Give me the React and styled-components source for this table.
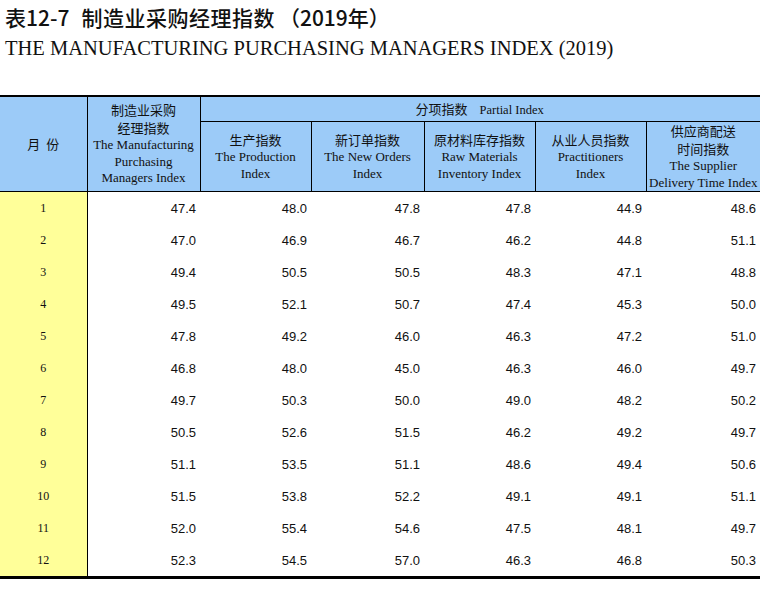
import React from 'react'
import styled, { createGlobalStyle } from 'styled-components'

const Global = createGlobalStyle`
  html, body { margin: 0; padding: 0; background: #fff; }
  body { width: 760px; overflow: hidden; }
`

const rows = [
  ['1', '47.4', '48.0', '47.8', '47.8', '44.9', '48.6'],
  ['2', '47.0', '46.9', '46.7', '46.2', '44.8', '51.1'],
  ['3', '49.4', '50.5', '50.5', '48.3', '47.1', '48.8'],
  ['4', '49.5', '52.1', '50.7', '47.4', '45.3', '50.0'],
  ['5', '47.8', '49.2', '46.0', '46.3', '47.2', '51.0'],
  ['6', '46.8', '48.0', '45.0', '46.3', '46.0', '49.7'],
  ['7', '49.7', '50.3', '50.0', '49.0', '48.2', '50.2'],
  ['8', '50.5', '52.6', '51.5', '46.2', '49.2', '49.7'],
  ['9', '51.1', '53.5', '51.1', '48.6', '49.4', '50.6'],
  ['10', '51.5', '53.8', '52.2', '49.1', '49.1', '51.1'],
  ['11', '52.0', '55.4', '54.6', '47.5', '48.1', '49.7'],
  ['12', '52.3', '54.5', '57.0', '46.3', '46.8', '50.3'],
]

const partials = [
  { cn: ['生产指数'], en: ['The Production', 'Index'] },
  { cn: ['新订单指数'], en: ['The New Orders', 'Index'] },
  { cn: ['原材料库存指数'], en: ['Raw Materials', 'Inventory Index'] },
  { cn: ['从业人员指数'], en: ['Practitioners', 'Index'] },
  { cn: ['供应商配送', '时间指数'], en: ['The Supplier', 'Delivery Time Index'] },
]

const widths = [87, 113, 111, 113, 111, 111, 114]

function App() {
  return (
    <Page>
      <Global />
      <Heading>
        <CnTitle>
          <span>表12-7</span>
          <TitleMain>制造业采购经理指数</TitleMain>
          <TitleYear>（2019年）</TitleYear>
        </CnTitle>
        <EnTitle>THE MANUFACTURING PURCHASING MANAGERS INDEX (2019)</EnTitle>
      </Heading>
      <Table>
        <colgroup>
          {widths.map((w, i) => <col key={i} style={{ width: w }} />)}
        </colgroup>
        <thead>
          <tr>
            <HeadCell rowSpan={2} $first>
              <Cn>月&nbsp;&nbsp;份</Cn>
            </HeadCell>
            <HeadCell rowSpan={2}>
              <Cn>制造业采购</Cn>
              <Cn>经理指数</Cn>
              <En>The Manufacturing</En>
              <En>Purchasing</En>
              <En>Managers Index</En>
            </HeadCell>
            <GroupCell colSpan={5}>
              <Cn as="span">分项指数</Cn>
              <En as="span" $inline>Partial Index</En>
            </GroupCell>
          </tr>
          <tr>
            {partials.map((p, i) => (
              <SubCell key={i}>
                {p.cn.map(t => <Cn key={t}>{t}</Cn>)}
                {p.en.map(t => <En key={t}>{t}</En>)}
              </SubCell>
            ))}
          </tr>
        </thead>
        <tbody>
          {rows.map((r, ri) => (
            <tr key={ri}>
              <Month>{r[0]}</Month>
              {r.slice(1).map((v, ci) => (
                <Value key={ci}>{v}</Value>
              ))}
            </tr>
          ))}
        </tbody>
      </Table>
    </Page>
  )
}

export default App

const Page = styled.div`
  width: 760px;
  height: 609px;
  background: #fff;
`

const Heading = styled.div`
  padding: 0 0 0 5px;
  height: 95px;
  box-sizing: border-box;
`

const CnTitle = styled.div`
  display: flex;
  align-items: center;
  font-family: "Noto Sans CJK SC", sans-serif;
  font-weight: 500;
  font-size: 21px;
  line-height: 34px;
  color: #111;
  white-space: nowrap;
`

const TitleMain = styled.span`
  margin-left: 12px;
  letter-spacing: 0.5px;
`

const TitleYear = styled.span`
  margin-left: 4px;
`

const EnTitle = styled.div`
  font-family: "Liberation Serif", serif;
  font-size: 20.5px;
  line-height: 28px;
  color: #111;
  white-space: nowrap;
`

const Table = styled.table`
  border-collapse: collapse;
  table-layout: fixed;
  width: 760px;
  border-top: 2px solid #000;
  border-bottom: 3px solid #000;
`

const HeadCell = styled.th`
  background: #9ccbf8;
  font-weight: normal;
  text-align: center;
  vertical-align: middle;
  padding: 0;
  border-left: ${p => (p.$first ? 'none' : '1px solid #000')};
  border-bottom: 1px solid #000;
`

const GroupCell = styled.th`
  background: #9ccbf8;
  font-weight: normal;
  height: 24px;
  padding: 0 0 0 215px;
  border-left: 1px solid #000;
  border-bottom: 1px solid #000;
  text-align: left;
`

const SubCell = styled.th`
  background: #9ccbf8;
  font-weight: normal;
  height: 69px;
  padding: 0;
  text-align: center;
  vertical-align: middle;
  border-left: 1px solid #000;
  border-bottom: 1px solid #000;
`

const Cn = styled.div`
  font-family: "Noto Sans CJK SC", sans-serif;
  font-size: 13px;
  line-height: 18px;
  color: #111;
`

const En = styled.div`
  font-family: "Liberation Serif", serif;
  font-size: 13px;
  line-height: 16.5px;
  color: #111;
  white-space: nowrap;
  ${p => p.$inline && 'margin-left: 12px; font-size: 12.5px;'}
`

const Month = styled.td`
  background: #ffff99;
  font-family: "Liberation Serif", serif;
  font-size: 12px;
  text-align: center;
  height: 32px;
  padding: 0;
  color: #111;
  border-right: 1px solid #000;
`

const Value = styled.td`
  font-family: "Liberation Sans", Arial, sans-serif;
  font-size: 13px;
  text-align: right;
  padding: 0 4px 0 0;
  height: 32px;
  color: #111;
`
